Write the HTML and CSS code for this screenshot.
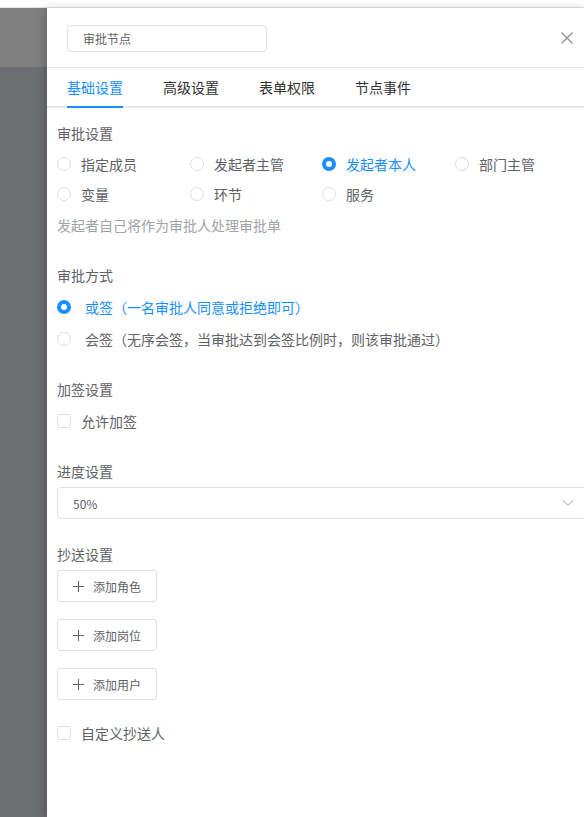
FILE: index.html
```html
<!DOCTYPE html>
<html lang="zh">
<head>
<meta charset="utf-8">
<title>审批节点</title>
<link rel="stylesheet" href="styles.css">
</head>
<body>
<div class="topstrip"></div>
<div class="main">
  <div class="mask">
    <div class="mask-top"></div>
    <div class="mask-rest"></div>
  </div>
  <div class="panel">
    <div class="panel-header">
      <div class="name-input">审批节点</div>
      <svg class="close" width="12" height="12" viewBox="0 0 12 12"><path d="M0.5 0.5 L11.5 11.5 M11.5 0.5 L0.5 11.5" stroke="#8a8d93" stroke-width="1.3" fill="none"/></svg>
    </div>
    <div class="tabs">
      <div class="tab active">基础设置</div>
      <div class="tab">高级设置</div>
      <div class="tab">表单权限</div>
      <div class="tab">节点事件</div>
    </div>
    <div class="content">
      <div class="section s1">
        <div class="title">审批设置</div>
        <div class="radio-grid">
          <label class="radio"><span class="dot"></span><span>指定成员</span></label>
          <label class="radio"><span class="dot"></span><span>发起者主管</span></label>
          <label class="radio checked"><span class="dot"></span><span>发起者本人</span></label>
          <label class="radio"><span class="dot"></span><span>部门主管</span></label>
          <label class="radio"><span class="dot"></span><span>变量</span></label>
          <label class="radio"><span class="dot"></span><span>环节</span></label>
          <label class="radio"><span class="dot"></span><span>服务</span></label>
        </div>
        <div class="hint">发起者自己将作为审批人处理审批单</div>
      </div>
      <div class="section s2">
        <div class="title">审批方式</div>
        <div class="radio-list">
          <label class="radio wide checked"><span class="dot"></span><span>或签（一名审批人同意或拒绝即可）</span></label>
          <label class="radio wide"><span class="dot"></span><span>会签（无序会签，当审批达到会签比例时，则该审批通过）</span></label>
        </div>
      </div>
      <div class="section s3">
        <div class="title">加签设置</div>
        <label class="check"><span class="box"></span><span>允许加签</span></label>
      </div>
      <div class="section s4">
        <div class="title">进度设置</div>
        <div class="select">
          <span>50%</span>
          <svg width="12" height="8" viewBox="0 0 12 8"><path d="M0.8 1.2 L6 6.2 L11.2 1.2" stroke="#c0c4cc" stroke-width="1.2" fill="none"/></svg>
        </div>
      </div>
      <div class="section s5">
        <div class="title">抄送设置</div>
        <div class="btns">
          <div class="btn"><svg width="11" height="11" viewBox="0 0 11 11"><path d="M5.5 0 V11 M0 5.5 H11" stroke="#606266" stroke-width="1.1"/></svg><span>添加角色</span></div>
          <div class="btn"><svg width="11" height="11" viewBox="0 0 11 11"><path d="M5.5 0 V11 M0 5.5 H11" stroke="#606266" stroke-width="1.1"/></svg><span>添加岗位</span></div>
          <div class="btn"><svg width="11" height="11" viewBox="0 0 11 11"><path d="M5.5 0 V11 M0 5.5 H11" stroke="#606266" stroke-width="1.1"/></svg><span>添加用户</span></div>
        </div>
        <label class="check cc"><span class="box"></span><span>自定义抄送人</span></label>
      </div>
    </div>
  </div>
</div>
</body>
</html>
```
FILE: styles.css
```css
* { box-sizing: border-box; }
html, body { margin: 0; padding: 0; height: 100%; overflow: hidden; }
body {
  background: #fff;
  font-family: "Noto Sans CJK SC", "Noto Sans", sans-serif;
  color: #606266;
}
.topstrip {
  height: 8px;
  background: #fff;
  border-bottom: 1px solid #e2e3e6;
}
.main {
  display: flex;
  height: calc(100vh - 8px);
}
.mask {
  width: 47px;
  flex: none;
  display: flex;
  flex-direction: column;
}
.mask-top { height: 59px; background: #808080; }
.mask-rest { flex: 1; background: #6d6e71; }
.panel {
  flex: 1;
  min-width: 0;
  background: #fff;
  box-shadow: -3px 0 8px rgba(0,0,0,0.18);
  position: relative;
}
.panel-header {
  height: 60px;
  border-bottom: 1px solid #e4e7ed;
  display: flex;
  align-items: center;
  padding: 0 11px 0 20px;
  justify-content: space-between;
}
.name-input {
  width: 200px;
  height: 27px;
  border: 1px solid #dcdfe6;
  border-radius: 4px;
  font-size: 12px;
  line-height: 25px;
  padding-left: 15px;
  color: #606266;
  margin-top: 1px;
}
.close { display: block; margin-top: 1px; }
.tabs {
  display: flex;
  gap: 40px;
  padding-left: 20px;
  height: 40px;
  border-bottom: 2px solid #e4e7ed;
}
.tab {
  font-size: 14px;
  line-height: 38px;
  color: #303133;
  height: 40px;
}
.tab.active {
  color: #1890ff;
  border-bottom: 2px solid #1890ff;
}
.content {
  padding: 14px 0 0 10px;
}
.title {
  font-size: 14px;
  line-height: 22px;
  height: 22px;
  color: #606266;
}
.radio-grid {
  display: grid;
  grid-template-columns: 133px 132px 133px 133px;
  margin-top: 5px;
}
.radio {
  display: flex;
  align-items: center;
  height: 30px;
  font-size: 14px;
  color: #606266;
  white-space: nowrap;
}
.dot {
  width: 14px;
  height: 14px;
  border: 1px solid #dcdfe6;
  border-radius: 50%;
  margin-right: 10px;
  flex: none;
  background: #fff;
}
.radio.checked { color: #1890ff; }
.radio.checked .dot {
  border: 4px solid #1890ff;
  background: #fff;
}
.radio.wide { height: 32px; }
.radio.wide .dot { margin-right: 14px; }
.hint {
  font-size: 14px;
  line-height: 30px;
  margin-top: 1px;
  color: #a0a3a8;
}
.s1 { margin-bottom: 24px; }
.radio-list { margin-top: 5px; }
.s2 { margin-bottom: 23px; }
.check {
  display: flex;
  align-items: center;
  height: 32px;
  margin-top: 5px;
  font-size: 14px;
  color: #606266;
}
.box {
  width: 14px;
  height: 14px;
  border: 1px solid #dcdfe6;
  border-radius: 2px;
  margin-right: 10px;
  flex: none;
}
.s3 { margin-bottom: 23px; }
.select {
  margin-top: 5px;
  width: 533px;
  height: 32px;
  border: 1px solid #dcdfe6;
  border-radius: 4px;
  display: flex;
  align-items: center;
  justify-content: space-between;
  padding: 0 15px 0 15px;
  font-size: 12px;
  color: #606266;
}
.select svg { display: block; }
.s4 { margin-bottom: 24px; }
.btns {
  display: flex;
  flex-direction: column;
  gap: 17px;
  margin-top: 5px;
}
.btn {
  width: 100px;
  height: 32px;
  border: 1px solid #dcdfe6;
  border-radius: 3px;
  display: flex;
  align-items: center;
  padding-left: 15px;
  font-size: 12px;
  color: #606266;
}
.btn svg { margin-right: 9px; display: block; }
.check.cc { margin-top: 17px; }
```
